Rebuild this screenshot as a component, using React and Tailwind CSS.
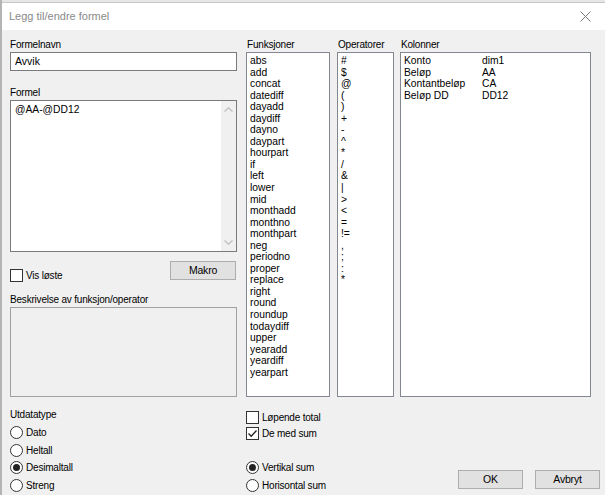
import { useState } from "react";

const funksjoner = [
  "abs", "add", "concat", "datediff", "dayadd", "daydiff", "dayno", "daypart", "hourpart", "if", "left",
  "lower", "mid", "monthadd", "monthno", "monthpart", "neg", "periodno", "proper", "replace", "right",
  "round", "roundup", "todaydiff", "upper", "yearadd", "yeardiff", "yearpart",
];

const operatorer = ["#", "$", "@", "(", ")", "+", "-", "^", "*", "/", "&", "|", ">", "<", "=", "!=", ",", ";", ":", "*"];

const kolonner = [
  ["Konto", "dim1"],
  ["Beløp", "AA"],
  ["Kontantbeløp", "CA"],
  ["Beløp DD", "DD12"],
];

const Check = ({ checked, label, onClick }) => (
  <div className="flex items-center gap-[3px] h-[16px] cursor-default" onClick={onClick}>
    <div className="w-[13px] h-[13px] border border-[#333] bg-white flex items-center justify-center">
      {checked && (
        <svg width="11" height="11" viewBox="0 0 11 11">
          <path d="M1.5 5.5 L4.2 8.3 L9.5 2.5" fill="none" stroke="#222" strokeWidth="1.3" />
        </svg>
      )}
    </div>
    <span>{label}</span>
  </div>
);

const Radio = ({ checked, label, onClick }) => (
  <div className="flex items-center gap-[3px] h-[17.5px] cursor-default" onClick={onClick}>
    <div className="w-[13px] h-[13px] rounded-full border border-[#333] bg-white flex items-center justify-center">
      {checked && <div className="w-[7px] h-[7px] rounded-full bg-[#222]" />}
    </div>
    <span>{label}</span>
  </div>
);

const Button = ({ children, className = "" }) => (
  <button className={`h-[19px] bg-[#e1e1e1] border border-[#adadad] text-[10.5px] text-black leading-none ${className}`}>
    {children}
  </button>
);

export default function App() {
  const [navn, setNavn] = useState("Avvik");
  const [formel, setFormel] = useState("@AA-@DD12");
  const [visLoste, setVisLoste] = useState(false);
  const [lopende, setLopende] = useState(false);
  const [medSum, setMedSum] = useState(true);
  const [type, setType] = useState("Desimaltall");
  const [sum, setSum] = useState("Vertikal sum");

  return (
    <div className="w-[605px] h-[495px] overflow-hidden bg-[#f0f0f0] border-l-2 border-[#b4b4b4] text-[10px] tracking-[-0.2px] text-black font-['Liberation_Sans',Arial,sans-serif]">
      <div className="h-[3px] bg-[#e6e6e6] border-b border-[#c8c8c8]" />
      <div className="h-[27px] bg-white flex items-center justify-between pl-[7px] pr-[14px]">
        <span className="text-[#8a8a8a] text-[11px] tracking-normal">Legg til/endre formel</span>
        <svg width="11" height="11" viewBox="0 0 11 11">
          <path d="M0.5 0.5 L10.5 10.5 M10.5 0.5 L0.5 10.5" stroke="#7a7a7a" strokeWidth="1" />
        </svg>
      </div>

      <div className="flex pl-[8px] pt-[7px] h-[367px]">
        {/* venstre kolonne */}
        <div className="w-[227px] flex flex-col">
          <div className="h-[15px] leading-[15px]">Formelnavn</div>
          <input
            value={navn}
            onChange={(e) => setNavn(e.target.value)}
            className="h-[19px] bg-white border border-[#7a7a7a] px-[4px] text-[10.5px] tracking-normal outline-none"
          />
          <div className="h-[15px] leading-[15px] mt-[14px]">Formel</div>
          <div className="h-[154px] bg-white border border-[#7a7a7a] flex">
            <textarea
              value={formel}
              onChange={(e) => setFormel(e.target.value)}
              className="flex-1 resize-none outline-none px-[4px] py-[2px] text-[10.3px] tracking-normal leading-[13px]"
            />
            <div className="w-[15px] bg-[#f0f0f0] flex flex-col items-center justify-between py-[6px]">
              <svg width="9" height="5" viewBox="0 0 9 5">
                <path d="M0.5 4.5 L4.5 0.8 L8.5 4.5" fill="none" stroke="#bdbdbd" strokeWidth="1.2" />
              </svg>
              <svg width="9" height="5" viewBox="0 0 9 5">
                <path d="M0.5 0.5 L4.5 4.2 L8.5 0.5" fill="none" stroke="#bdbdbd" strokeWidth="1.2" />
              </svg>
            </div>
          </div>
          <div className="flex justify-between items-start mt-[9px] h-[27px]">
            <div className="pt-[6px]">
              <Check checked={visLoste} label="Vis løste" onClick={() => setVisLoste(!visLoste)} />
            </div>
            <Button className="w-[66px] mr-[1px]">Makro</Button>
          </div>
          <div className="h-[15px] leading-[15px] mt-[4px]">Beskrivelse av funksjon/operator</div>
          <div className="h-[91px] bg-[#f0f0f0] border border-[#a0a0a0]" />
        </div>

        {/* funksjoner */}
        <div className="w-[84px] ml-[9px] flex flex-col">
          <div className="h-[15px] leading-[15px] pl-[1px]">Funksjoner</div>
          <div className="flex-1 bg-white border border-[#828790] pl-[3px] pt-[2px] text-[10.3px] tracking-normal">
            {funksjoner.map((f) => (
              <div key={f} className="h-[11.55px] leading-[11.55px]">{f}</div>
            ))}
          </div>
        </div>

        {/* operatorer */}
        <div className="w-[57px] ml-[7px] flex flex-col">
          <div className="h-[15px] leading-[15px] pl-[1px]">Operatorer</div>
          <div className="flex-1 bg-white border border-[#828790] pl-[3px] pt-[2px] text-[10.3px] tracking-normal">
            {operatorer.map((o, i) => (
              <div key={i} className="h-[11.55px] leading-[11.55px]">{o}</div>
            ))}
          </div>
        </div>

        {/* kolonner */}
        <div className="w-[191px] ml-[6px] flex flex-col">
          <div className="h-[15px] leading-[15px] pl-[1px]">Kolonner</div>
          <div className="flex-1 bg-white border border-[#828790] pl-[3px] pt-[2px] text-[10.3px] tracking-normal">
            {kolonner.map(([navn, kode]) => (
              <div key={navn} className="flex h-[11.55px] leading-[11.55px]">
                <span className="w-[78px]">{navn}</span>
                <span>{kode}</span>
              </div>
            ))}
          </div>
        </div>
      </div>

      {/* bunn */}
      <div className="flex pl-[8px] pt-[10px]">
        <div className="w-[236px] flex flex-col">
          <div className="h-[17px] leading-[16px]">Utdatatype</div>
          {["Dato", "Heltall", "Desimaltall", "Streng"].map((t) => (
            <Radio key={t} label={t} checked={type === t} onClick={() => setType(t)} />
          ))}
        </div>
        <div className="w-[212px] flex flex-col pt-[2px]">
          <Check checked={lopende} label="Løpende total" onClick={() => setLopende(!lopende)} />
          <Check checked={medSum} label="De med sum" onClick={() => setMedSum(!medSum)} />
          <div className="h-[18px]" />
          {["Vertikal sum", "Horisontal sum"].map((s) => (
            <Radio key={s} label={s} checked={sum === s} onClick={() => setSum(s)} />
          ))}
        </div>
        <div className="flex items-start gap-[12px] pt-[63px]">
          <Button className="w-[65px]">OK</Button>
          <Button className="w-[65px]">Avbryt</Button>
        </div>
      </div>
    </div>
  );
}
